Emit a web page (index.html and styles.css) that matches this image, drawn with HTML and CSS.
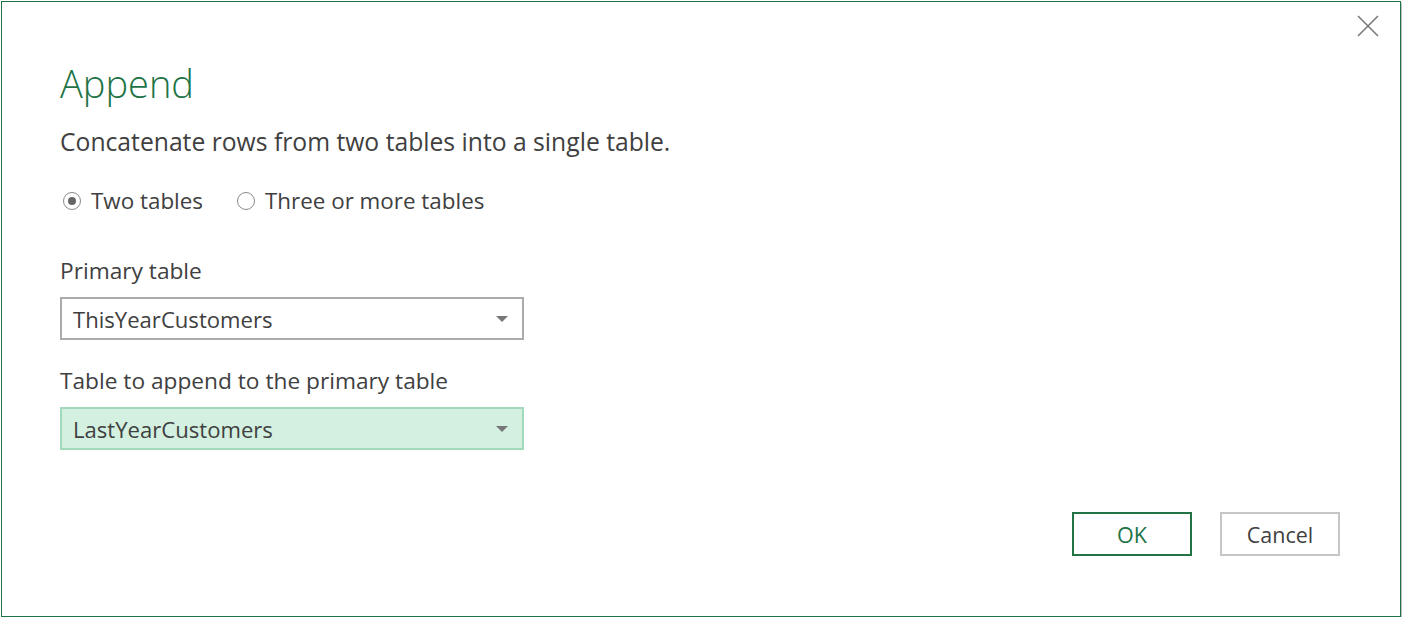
FILE: index.html
```html
<!DOCTYPE html>
<html>
<head>
<meta charset="utf-8">
<link rel="stylesheet" href="styles.css">
</head>
<body>
<div class="dialog">
  <button class="close" aria-label="Close">
    <svg width="22" height="22" viewBox="0 0 22 22"><path d="M1 1 L21 21 M21 1 L1 21" stroke="#7a7a7a" stroke-width="1.6" fill="none"/></svg>
  </button>
  <h1 class="title">Append</h1>
  <p class="desc">Concatenate rows from two tables into a single table.</p>
  <div class="radios">
    <label class="radio"><span class="dot checked"></span>Two tables</label>
    <label class="radio"><span class="dot"></span>Three or more tables</label>
  </div>
  <div class="field">
    <div class="label">Primary table</div>
    <div class="select"><span>ThisYearCustomers</span><span class="arrow"></span></div>
  </div>
  <div class="field">
    <div class="label">Table to append to the primary table</div>
    <div class="select focus"><span>LastYearCustomers</span><span class="arrow"></span></div>
  </div>
  <div class="actions">
    <button class="btn primary">OK</button>
    <button class="btn">Cancel</button>
  </div>
</div>
</body>
</html>
```
FILE: styles.css
```css
html, body {
  margin: 0;
  padding: 0;
  background: #ffffff;
}
body {
  font-family: "Open Sans", "Noto Sans", sans-serif;
  color: #404040;
  padding: 1px 0 0 1px;
}
.dialog {
  position: relative;
  box-sizing: border-box;
  width: 1400px;
  height: 616px;
  border: 1px solid #217346;
  background: #fff;
  box-shadow: 2px 2px 2px rgba(0,0,0,0.28);
  padding: 0 60px 0 58px;
  display: flex;
  flex-direction: column;
}
.close {
  position: absolute;
  top: 13px;
  right: 21px;
  width: 22px;
  height: 22px;
  padding: 0;
  border: none;
  background: none;
}
.close svg { display: block; }
.title {
  margin: 57px 0 0 0;
  font-weight: 300;
  font-size: 38px;
  line-height: 48px;
  color: #217346;
}
.desc {
  margin: 19px 0 0 0;
  font-size: 24.7px;
  line-height: 32px;
  color: #404040;
}
.radios {
  display: flex;
  gap: 31px;
  margin-top: 28px;
  font-size: 22.4px;
  line-height: 30px;
}
.radio {
  display: flex;
  align-items: center;
  gap: 10px;
}
.dot {
  box-sizing: border-box;
  width: 18px;
  height: 18px;
  border: 1.5px solid #8a8a8a;
  border-radius: 50%;
  margin-left: 3px;
  display: flex;
  align-items: center;
  justify-content: center;
}
.dot.checked::after {
  content: "";
  width: 8px;
  height: 8px;
  border-radius: 50%;
  background: #666;
}
.field { margin-top: 40px; }
.field + .field { margin-top: 26px; }
.label {
  font-size: 22.7px;
  line-height: 30px;
}
.select {
  box-sizing: border-box;
  margin-top: 11px;
  width: 464px;
  height: 43px;
  border: 2px solid #ababab;
  display: flex;
  align-items: center;
  justify-content: space-between;
  padding: 0 14px 0 11px;
  font-size: 22.1px;
  color: #404040;
}
.select.focus {
  background: #d3f0e0;
  border-color: #a2d9bb;
}
.arrow {
  width: 0;
  height: 0;
  border-left: 6px solid transparent;
  border-right: 6px solid transparent;
  border-top: 6px solid #777;
}
.actions {
  margin-top: auto;
  margin-bottom: 60px;
  display: flex;
  justify-content: flex-end;
  gap: 28px;
}
.btn {
  box-sizing: border-box;
  width: 120px;
  height: 44px;
  border: 2px solid #c6c6c6;
  background: #fff;
  font-family: "Open Sans", "Noto Sans", sans-serif;
  font-size: 21.5px;
  color: #404040;
  padding: 0;
}
.btn.primary {
  border-color: #217346;
  color: #217346;
}
```
